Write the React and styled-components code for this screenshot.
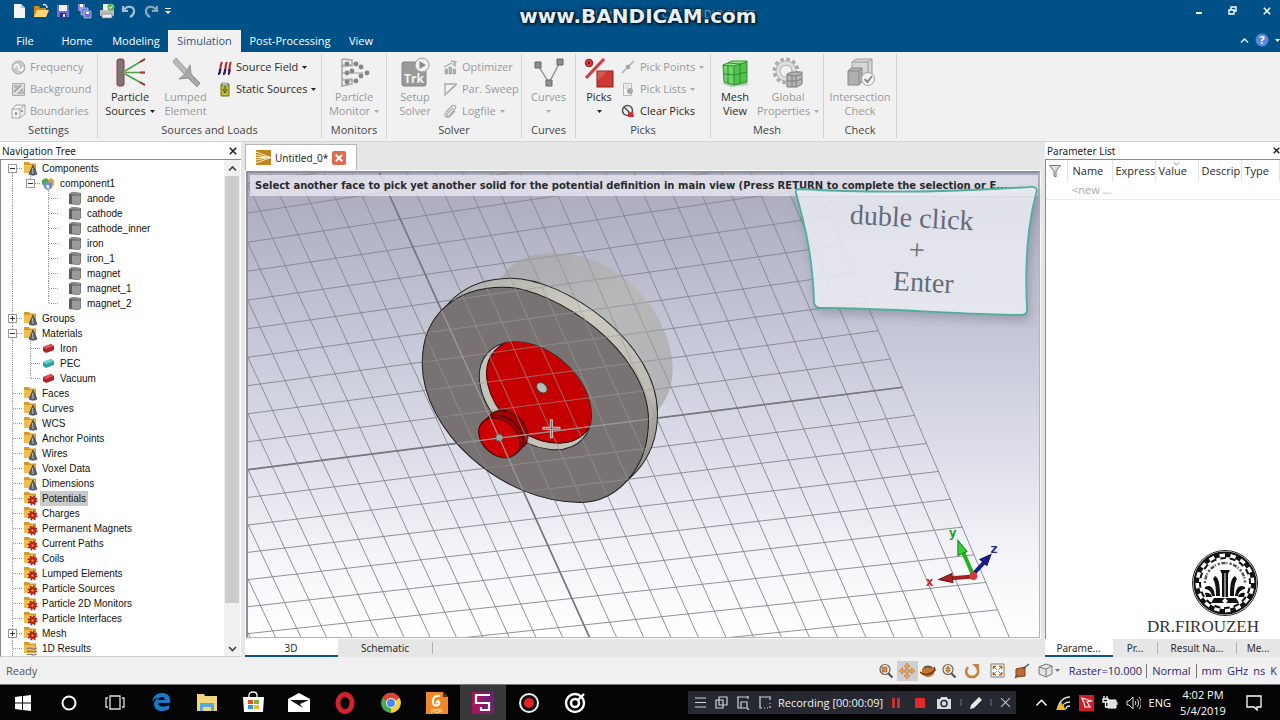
import React from 'react';
import styled, { createGlobalStyle, css } from 'styled-components';

const GlobalStyles = createGlobalStyle`
  * {
    box-sizing: border-box;
  }
  html, body {
    height: 100%;
  }
  body {
    margin: 0;
    overflow: hidden;
    background: #000;
  }
  #root {
    height: 100%;
  }
  button {
    border: 0;
    padding: 0;
    background: none;
    font: inherit;
    color: inherit;
    cursor: default;
  }
  svg {
    display: block;
    flex: none;
  }
`;

const uiFont = css`
  font-family: 'Open Sans', 'Noto Sans', sans-serif;
  font-size: 11px;
  line-height: 14px;
`;

const panelFont = css`
  font-family: 'Noto Sans', sans-serif;
  font-size: 10px;
`;

const AppStyles = styled.div`
  display: flex;
  flex-direction: column;
  height: 100vh;
  background: #e6e6e6;
  color: #2b2b2b;
  ${uiFont}
`;

/* ---------- title bar and ribbon tabs ---------- */

const Header = styled.header`
  position: relative;
  flex: none;
  background: #005187;
  color: #fff;
`;

const TitleRow = styled.div`
  display: flex;
  align-items: center;
  height: 30px;
  padding: 0 9px 8px 11px;
`;

const QuickAccess = styled.div`
  display: flex;
  align-items: center;
  gap: 6px;
  flex: 1;
`;

const WindowButtons = styled.div`
  display: flex;
  align-items: center;
  gap: 25px;
`;

const WindowTitle = styled.div`
  position: absolute;
  top: 7px;
  left: 0;
  right: 0;
  padding-left: 70px;
  text-align: center;
  color: #7fa9c6;
`;

const Watermark = styled.div`
  position: absolute;
  top: 4px;
  left: 0;
  right: 4px;
  text-align: center;
  font-family: 'DejaVu Sans', sans-serif;
  font-weight: bold;
  font-size: 20px;
  line-height: 24px;
  color: #e4f0f8;
  text-shadow: 0 0 2px #001828, 0 0 2px #001828, 1px 1px 3px #001828, 0 0 4px #001828;
`;

const TabRow = styled.nav`
  display: flex;
  height: 22px;
`;

const RibbonTab = styled.button`
  width: ${(p) => p.$width}px;
  text-align: center;
  background: ${(p) => (p.$active ? '#f1f1f1' : 'transparent')};
  color: ${(p) => (p.$active ? '#2f5480' : '#fff')};
`;

const TabTools = styled.div`
  display: flex;
  flex: 1;
  align-items: center;
  justify-content: flex-end;
  gap: 6px;
  padding-bottom: 2px;
`;

/* ---------- ribbon ---------- */

const Ribbon = styled.div`
  display: flex;
  flex: none;
  height: 90px;
  padding: 2px 0 3px;
  background: #f1f1f1;
  border-bottom: 1px solid #d4d4d4;
`;

const RibbonGroup = styled.section`
  display: flex;
  flex-direction: column;
  width: ${(p) => p.$width}px;
  border-right: 1px solid #d2d2d2;
`;

const GroupBody = styled.div`
  display: flex;
  justify-content: ${(p) => (p.$center ? 'center' : 'flex-start')};
  height: 69px;
  padding: 2px 0 0 ${(p) => (p.$center ? 0 : 4)}px;
`;

const GroupLabel = styled.div`
  text-align: center;
  color: #444;
`;

const LargeButton = styled.button`
  display: flex;
  flex-direction: column;
  align-items: center;
  width: ${(p) => p.$width}px;
  padding-top: 1px;
  color: ${(p) => (p.$off ? '#999' : '#2b2b2b')};
  white-space: nowrap;

  svg.art {
    margin-bottom: 1px;
  }
`;

const SmallColumn = styled.div`
  display: flex;
  flex-direction: column;
  padding-left: ${(p) => p.$indent || 0}px;
`;

const SmallButton = styled.button`
  display: flex;
  align-items: center;
  gap: 4px;
  height: 22px;
  color: ${(p) => (p.$off ? '#999' : '#2b2b2b')};
  white-space: nowrap;
`;

const LabelLine = styled.span`
  display: flex;
  align-items: center;
  gap: 4px;
  height: 14px;
`;

/* ---------- workspace ---------- */

const Workspace = styled.main`
  display: flex;
  flex: 1;
  min-height: 0;
  gap: 4px;
`;

const Panel = styled.section`
  display: flex;
  flex-direction: column;
  flex: none;
  width: ${(p) => p.$width}px;
  background: #fff;
`;

const PanelTitle = styled.div`
  display: flex;
  align-items: center;
  justify-content: space-between;
  height: 18px;
  padding: ${(p) => p.$pad};
  ${panelFont}
  color: #222;
  border-bottom: 1px solid #8a8a8a;
`;

const TreeArea = styled.div`
  display: flex;
  flex: 1;
  min-height: 0;
  border-left: 1px solid #8a8a8a;
  border-bottom: 1px solid #cfcfcf;
`;

const Tree = styled.ul`
  flex: 1;
  margin: 0;
  padding: 1px 0 0 3px;
  overflow: hidden;
  list-style: none;
  font-family: 'Liberation Sans', Arial, sans-serif;
  font-size: 10px;
  color: #111;
`;

const TreeRow = styled.li`
  display: flex;
  align-items: center;
  height: 15px;
`;

const dots = (direction) => `repeating-linear-gradient(${direction}, #999 0 1px, transparent 1px 2px)`;
const guides = {
  blank: 'none',
  line: `${dots('to bottom')} 8px 0 / 1px 100% no-repeat`,
  tee: `${dots('to bottom')} 8px 0 / 1px 100% no-repeat, ${dots('to right')} 9px 7px / 9px 1px no-repeat`,
  end: `${dots('to bottom')} 8px 0 / 1px 8px no-repeat, ${dots('to right')} 9px 7px / 9px 1px no-repeat`,
  start: `${dots('to bottom')} 8px 8px / 1px 7px no-repeat, ${dots('to right')} 9px 7px / 9px 1px no-repeat`,
};

const Guide = styled.span`
  display: flex;
  align-items: center;
  justify-content: center;
  flex: none;
  width: 18px;
  height: 15px;
  padding-right: 1px;
  background: ${(p) => guides[p.$kind]};
`;

const Expander = styled.button`
  display: flex;
  align-items: center;
  justify-content: center;
  width: 9px;
  height: 9px;
  border: 1px solid #999;
  background: #fff;
`;

const TreeIcon = styled.span`
  display: flex;
  justify-content: center;
  width: 16px;
  margin-left: ${(p) => (p.$deep ? 9 : 0)}px;
`;

const TreeLabel = styled.span`
  margin-left: 2px;
  padding: 0 2px;
  line-height: 15px;
  white-space: nowrap;
  background: ${(p) => (p.$selected ? '#cacaca' : 'transparent')};
`;

const ScrollBar = styled.div`
  display: flex;
  flex-direction: column;
  align-items: center;
  justify-content: space-between;
  width: 16px;
  margin-right: 1px;
  background: #f0f0f0;
`;

const ScrollButton = styled.button`
  display: flex;
  align-items: center;
  justify-content: center;
  width: 16px;
  height: 16px;
`;

const ScrollTrack = styled.div`
  flex: 1;
  width: 14px;
`;

const ScrollThumb = styled.div`
  height: 92%;
  background: #cdcdcd;
`;

/* ---------- document area ---------- */

const Document = styled.section`
  display: flex;
  flex-direction: column;
  flex: 1;
  min-width: 0;
`;

const FileTab = styled.div`
  display: flex;
  align-items: center;
  gap: 4px;
  align-self: flex-start;
  height: 26px;
  margin: 2px 0 1px;
  padding: 0 10px;
  background: #fff;
  border: 1px solid #b5b5b5;
  border-bottom: 0;
  ${panelFont}
`;

const FileClose = styled.button`
  display: flex;
  align-items: center;
  justify-content: center;
  width: 14px;
  height: 14px;
  border-radius: 2px;
  background: #e2694f;
`;

const Viewport = styled.div`
  position: relative;
  flex: 1;
  min-height: 0;
  margin: 0 1px 1px;
  border: 2px solid #8f8f97;
  border-right: 1px solid #b4b4b4;
  border-bottom: 1px solid #b4b4b4;
  outline: 1px solid #fafafa;
  background: linear-gradient(to bottom, #a9abbd 0%, #c3c5d5 32%, #dedfea 62%, #f5f5f9 83%, #ffffff 100%);

  .scene {
    width: 100%;
    height: 100%;
  }
`;

const Hint = styled.div`
  position: absolute;
  top: 2px;
  left: 2px;
  right: 1px;
  height: 21px;
  padding: 0 5px;
  overflow: hidden;
  white-space: nowrap;
  background: rgba(236, 236, 246, 0.75);
  font-family: 'DejaVu Sans', sans-serif;
  font-weight: bold;
  font-size: 10px;
  line-height: 21px;
  color: #2a2a2a;
`;

const Callout = styled.div`
  position: absolute;
  top: 9px;
  right: -2px;
  width: 252px;
  height: 146px;

  svg {
    position: absolute;
    top: 0;
    left: 0;
  }
`;

const CalloutText = styled.div`
  position: relative;
  display: flex;
  flex-direction: column;
  align-items: center;
  padding: 20px 6px 0 0;
  font-family: 'Liberation Serif', serif;
  font-size: 28px;
  line-height: 32px;
  color: #656b78;
`;

const CalloutLine = styled.span`
  padding-left: ${(p) => p.$indent}px;
  transform: rotate(3deg);
`;

const SheetTabs = styled.div`
  display: flex;
  flex: none;
  height: 18px;
  ${panelFont}
`;

const SheetTab = styled.button`
  flex: ${(p) => (p.$width ? 'none' : '1')};
  width: ${(p) => p.$width}px;
  padding-top: 2px;
  text-align: center;
  border-bottom: 2px solid ${(p) => (p.$active ? '#0a5496' : 'transparent')};
  background: ${(p) => (p.$active ? '#fff' : '#e6e6e6')};
  white-space: nowrap;

  span {
    display: block;
    line-height: 12px;
    border-right: 1px solid ${(p) => (p.$divided ? '#b0b0b0' : 'transparent')};
  }
`;

/* ---------- parameter list ---------- */

const ParameterArea = styled.div`
  position: relative;
  flex: 1;
  border-left: 1px solid #8a8a8a;
`;

const ParameterTable = styled.table`
  width: 100%;
  table-layout: fixed;
  border-collapse: collapse;
  ${uiFont}

  th {
    position: relative;
    height: 22px;
    padding: 0 0 0 3px;
    overflow: hidden;
    text-align: left;
    font-weight: normal;
    white-space: nowrap;
    border-right: 1px solid #e2e2e2;
  }
  th:nth-child(2),
  td {
    padding: 0 0 0 5px;
  }
  td {
    height: 17px;
    color: #a8a8a8;
    white-space: nowrap;
    border-bottom: 1px solid #ececec;
  }
`;

const SortMark = styled.span`
  position: absolute;
  top: 0;
  left: 17px;
`;

const Crest = styled.div`
  position: absolute;
  right: 21px;
  bottom: 2px;
  display: flex;
  flex-direction: column;
  align-items: flex-end;
  font-family: 'Liberation Serif', serif;
  font-size: 17px;
  line-height: 20px;
  color: #333;
`;

/* ---------- status bar ---------- */

const StatusBar = styled.footer`
  display: flex;
  align-items: center;
  flex: none;
  height: 28px;
  padding: 0 3px 0 6px;
  background: #f0f0f0;
  border-bottom: 1px solid #777;
  color: #555;

  .ready {
    flex: 1;
  }
`;

const StatusTools = styled.div`
  display: flex;
  align-items: center;
`;

const StatusButton = styled.button`
  display: flex;
  align-items: center;
  justify-content: center;
  width: ${(p) => p.$width || 21}px;
  height: 20px;
  gap: 2px;
  background: ${(p) => (p.$active ? '#cfcfcf' : 'none')};
`;

const StatusValue = styled.span`
  padding: 0 ${(p) => p.$pad}px;
  color: #2a2a6e;
  white-space: nowrap;
  border-right: ${(p) => (p.$divided ? '1px solid #777' : 0)};
`;

/* ---------- taskbar ---------- */

const TaskBar = styled.footer`
  display: flex;
  align-items: center;
  flex: none;
  height: 35px;
  padding-right: 18px;
  background: #040404;
  color: #fff;
`;

const TaskButton = styled.button`
  display: flex;
  align-items: center;
  justify-content: center;
  width: 46px;
  height: 35px;
  background: ${(p) => (p.$active ? '#38383a' : 'none')};
`;

const Recorder = styled.div`
  display: flex;
  align-items: center;
  justify-content: space-between;
  width: 328px;
  height: 23px;
  margin-left: auto;
  padding: 0 5px;
  background: #262932;
  color: #f0f0f0;
  white-space: nowrap;
`;

const Tray = styled.div`
  display: flex;
  align-items: center;
  gap: 8px;
  margin-left: 19px;
`;

const Clock = styled.time`
  width: 48px;
  margin: 0 11px 0 0;
  text-align: center;
  line-height: 16px;
  white-space: nowrap;
`;

/* ---------- small drawings ---------- */

const Caret = ({ color = '#333' }) => (
  <svg width="5" height="3" viewBox="0 0 5 3">
    <path d="M0 0h5L2.500 3z" fill={color} />
  </svg>
);

const Cross = ({ size = 8, color = '#222', weight = 1.6 }) => (
  <svg width={size} height={size} viewBox="0 0 8 8">
    <path d="M.8 .8l6.400 6.400M7.200 .8L.8 7.200" stroke={color} strokeWidth={weight} />
  </svg>
);

const Chevron = ({ up, color = '#444', size = 9, weight = 1.7 }) => (
  <svg width={size} height={size} viewBox="0 0 9 9">
    <path d={up ? 'M1 6.500L4.500 3L8 6.500' : 'M1 3L4.500 6.500L8 3'} fill="none" stroke={color} strokeWidth={weight} />
  </svg>
);

const quickIcons = {
  New: (
    <>
      <path d="M3 1h7l4 4v10H3z" fill="#f4f4f4" />
      <path d="M10 1v4h4z" fill="#c4c8cc" />
    </>
  ),
  Open: (
    <>
      <path d="M1 3h5l1 2h6v9H1z" fill="#c98d1c" />
      <path d="M4 7h12l-3 7H1z" fill="#ffd677" />
      <path d="M10 2c2-1 4 0 4 3" fill="none" stroke="#e9f0f6" strokeWidth="1.500" />
    </>
  ),
  Save: (
    <>
      <path d="M2 2h12v12H2z" fill="#6c6fd0" />
      <path d="M4 2h8v6H4z" fill="#f2f4fa" />
      <path d="M5 10h6v4H5z" fill="#2d2f6b" />
      <path d="M8 11h2v3H8z" fill="#e8e8f4" />
    </>
  ),
  'Save all': (
    <>
      <path d="M1 1h7v7H1z" fill="#8386dc" />
      <path d="M3 1h3v3H3z" fill="#fff" />
      <path d="M4 5h7v7H4z" fill="#7478d4" stroke="#dce4f4" strokeWidth=".6" />
      <path d="M7 8h7v7H7z" fill="#6c6fd0" stroke="#dce4f4" strokeWidth=".6" />
      <path d="M9 9h3v2H9z" fill="#fff" />
    </>
  ),
  Print: (
    <>
      <path d="M4 1h8v6H4z" fill="#f0f2ea" />
      <path d="M1 7h14v6H1z" fill="#b9bcb8" />
      <path d="M3 11h10v4H3z" fill="#ececec" stroke="#777" strokeWidth=".7" />
      <circle cx="12" cy="4" r="3.600" fill="#58b056" />
      <path d="M10.200 4l1.300 1.500 2.200-3" fill="none" stroke="#fff" />
    </>
  ),
  Undo: <path d="M2 3v5h5M3 7c3-5 11-4 10 2c-.3 2-2 4-4 5" fill="none" stroke="#a9bccb" strokeWidth="2.200" />,
  Redo: <path d="M14 3v5H9M13 7C10 2 2 3 3 9c.3 2 2 4 4 5" fill="none" stroke="#8ba6ba" strokeWidth="2.200" />,
};

const QuickIcon = ({ name }) => (
  <svg width="16" height="16" viewBox="0 0 16 16">
    {quickIcons[name]}
  </svg>
);

const largeIcons = {
  particle: (
    <>
      <rect x="3" y="2" width="7" height="27" rx="2" fill="#777" stroke="#b12f2f" />
      <path d="M11 14L31 2M11 15.500h20M11 17l20 11" fill="none" stroke="#45a845" strokeWidth="1.600" />
      <path d="M26 5l5-3M26 15.500h5M26 25.300l5 2.700" stroke="#c02828" strokeWidth="1.800" />
    </>
  ),
  lumped: (
    <>
      <path d="M6 1l13 14-4 3L3 5z" fill="#b9b9b9" stroke="#999" />
      <path d="M20 8l1 9 9 9-3 4-9-9-9 1 7-6z" fill="#a9a9a9" stroke="#909090" />
    </>
  ),
  monitor: (
    <>
      <path d="M4 2l10 1v6l-10-1M4 2v27l10-2v-5l-10 1" fill="none" stroke="#a6a6a6" strokeWidth="1.500" />
      <path d="M3 10l17-4M3 16h22M3 22l17 3" stroke="#b4b4b4" strokeWidth="1.500" />
      {[[9, 7], [18, 7], [14, 14], [23, 10], [29, 16], [23, 19], [9, 16], [9, 25], [18, 24]].map(([x, y]) => (
        <circle key={`${x}-${y}`} cx={x} cy={y} r="2.400" fill="#868686" />
      ))}
    </>
  ),
  solver: (
    <>
      <rect x="3" y="5" width="24" height="24" rx="2" fill="#9a9a9a" stroke="#848484" />
      <text x="5" y="26" fontFamily="Open Sans" fontWeight="bold" fontSize="12" fill="#f2f2f2">Trk</text>
      <circle cx="23" cy="8" r="7" fill="#efefef" stroke="#9b9b9b" />
      <path d="M20.500 4l6.500 4-6.500 4z" fill="#8c8c8c" />
    </>
  ),
  curves: (
    <>
      <path d="M5 8l11 18L27 5" fill="none" stroke="#888" strokeWidth="1.300" />
      <path d="M2 5h6v6H2zM24 2h6v6h-6zM13 23h6v6h-6z" fill="#8e8e8e" stroke="#666" />
    </>
  ),
  picks: (
    <>
      <path d="M3 21L21 2" stroke="#cf4040" strokeWidth="3.200" />
      <circle cx="6" cy="6" r="3.800" fill="#cf3a3a" stroke="#8d1c1c" />
      <circle cx="6" cy="6" r="1" fill="#5e0c0c" />
      <rect x="14" y="14" width="16" height="16" fill="#cc3a34" stroke="#8d1c1c" />
      <path d="M14.500 24L24 14.500h-9.500z" fill="#d65650" />
    </>
  ),
  mesh: (
    <>
      <path d="M2 26l10 4 18-2-3-3z" fill="#b9c9b9" />
      <path d="M4 8l9-4h15v21l-13 3-10-3z" fill="#6fd468" />
      <path d="M4 8l9-4h15l-13 5z" fill="#98e592" />
      <path d="M15 9l13-4v20l-13 3z" fill="#55c24f" />
      <path d="M4 8l11 1 13-4M15 9v19M4 8l9-4h15v21l-13 3-10-3zM5 17l10 1 13-3M9 8.500v18M21 7v19M9 6l13 1" fill="none" stroke="#26862a" strokeWidth=".9" />
    </>
  ),
  global: (
    <>
      <circle cx="14" cy="14" r="11.500" fill="none" stroke="#adadad" strokeWidth="4" strokeDasharray="3.500 2.521" />
      <circle cx="14" cy="14" r="8" fill="none" stroke="#a8a8a8" strokeWidth="5" />
      <circle cx="14" cy="14" r="8" fill="none" stroke="#dedede" strokeWidth="3.500" />
      <path d="M15 17l5-2h10v12l-5 3H15z" fill="#b5b5b5" stroke="#7d7d7d" />
      <path d="M15 18l9 1 6-2M24 19v11M15 24h9l6-2M20 18v12" fill="none" stroke="#7d7d7d" />
    </>
  ),
  check: (
    <>
      <path d="M8 5l4-3h16v17l-4 4H8z" fill="#d6d6d6" stroke="#9c9c9c" />
      <path d="M8 5h16l4-3M24 5v18" fill="none" stroke="#9c9c9c" />
      <path d="M4 14l3-3h11v13l-3 4H4z" fill="#b0b0b0" stroke="#888" />
      <path d="M4 14h11l3-3M15 14v13" fill="none" stroke="#888" />
      <circle cx="24" cy="22" r="6.500" fill="#f1f1f1" stroke="#a2a2a2" />
      <path d="M20.500 22l3 3 4.500-6" fill="none" stroke="#8a8a8a" strokeWidth="2" />
    </>
  ),
};

const LargeIcon = ({ name }) => (
  <svg className="art" width="32" height="32" viewBox="0 0 32 32">
    {largeIcons[name]}
  </svg>
);

const smallIcons = {
  frequency: (
    <>
      <circle cx="7.500" cy="7.500" r="6.500" fill="#c9c9c9" stroke="#a9a9a9" />
      <path d="M3 8c2-5 4-4 4.500-.5S11 12 12 7" fill="none" stroke="#fff" strokeWidth="1.600" />
    </>
  ),
  background: (
    <>
      <path d="M1.500 1.500h12v12h-12z" fill="#dedede" stroke="#aaa" />
      <path d="M3 10l7-7M7 12l5-5" stroke="#999" strokeWidth="1.500" />
      <path d="M3 3h4v3H3zM9 9h4v3H9z" fill="#b9b9b9" />
    </>
  ),
  boundaries: (
    <>
      <path d="M1 5h8v9H1zM1 5l4-4h9v9l-5 4M9 5l5-4" fill="none" stroke="#a6a6a6" />
      <path d="M5 8v3M11 6v2" stroke="#999" strokeWidth="2" />
    </>
  ),
  field: (
    <>
      <path d="M1 14c4 0 1-8 4-12M6 14c4 0 1-8 4-12M11 14c3 0 0-8 3-12" fill="none" stroke="#b22030" strokeWidth="2" />
      <path d="M1 14c2 0 2-3 2-5M6 14c2 0 2-3 2-5M11 14c2 0 1-3 1.500-5" fill="none" stroke="#2a225e" strokeWidth="2.200" />
    </>
  ),
  battery: (
    <>
      <path d="M4 2h8v12H4z" fill="#b7bd2f" stroke="#6f7420" />
      <path d="M5 1h6v2H5z" fill="#ddd" stroke="#777" strokeWidth=".7" />
      <path d="M6 7l2 4 2-4M8 4v4" fill="none" stroke="#444" />
    </>
  ),
  optimizer: (
    <>
      <path d="M2 9h2.500v5H2zM6 7h2.500v7H6zM10 9h2.500v5H10z" fill="#b3b3b3" stroke="#999" strokeWidth=".6" />
      <path d="M1 7l8-4M8 1l5 1-3 3M12 1v6" fill="none" stroke="#aaa" strokeWidth="1.300" />
    </>
  ),
  sweep: <path d="M1 2h13M2 2v11L13 3M2 13l9-9" fill="none" stroke="#aaa" strokeWidth="1.300" />,
  clip: <path d="M10 4L4 10c-1 2 1 3 2 2l6-7c2-3-1-5-3-3L3 8c-3 4 1 7 4 4l5-5" fill="none" stroke="#aaa" strokeWidth="1.200" />,
  points: (
    <>
      <path d="M1 13L13 1" stroke="#b0b0b0" strokeWidth="1.500" />
      <circle cx="7" cy="7" r="2.300" fill="#a6a6a6" />
    </>
  ),
  lists: (
    <>
      <path d="M2.500 1.500h8v12h-8z" fill="#f4f4f4" stroke="#bbb" />
      <path d="M4 4h5M4 6h3" stroke="#ccc" />
      <circle cx="9" cy="9" r="3" fill="#a9a9a9" />
    </>
  ),
  clear: (
    <>
      <circle cx="6.500" cy="6.500" r="5" fill="none" stroke="#555" strokeWidth="1.600" />
      <path d="M3 3l7 7" stroke="#555" strokeWidth="1.600" />
      <path d="M7 8l3 1 2-2 1 6-6 0z" fill="#c83232" />
    </>
  ),
};

const SmallIcon = ({ name }) => (
  <svg width="15" height="15" viewBox="0 0 15 15">
    {smallIcons[name]}
  </svg>
);

const Folder = ({ kind }) => (
  <svg width="15" height="15" viewBox="0 0 15 15">
    <path d="M1 1h5l1 1.500h6V12H1z" fill="#d29a2a" />
    <path d="M1 4h11v8H1z" fill="#f0bd4c" />
    {kind === 'cone' && (
      <>
        <path d="M10 4L14 13c-2 1.500-6 1.500-8 0z" fill="#5d6370" stroke="#33363f" strokeWidth=".7" />
        <path d="M9.500 7L10 13" stroke="#b4bac6" />
      </>
    )}
    {kind === 'gear' && (
      <>
        <circle cx="9.500" cy="9.500" r="3.900" fill="none" stroke="#a31a12" strokeWidth="2.200" strokeDasharray="1.600 1.463" />
        <circle cx="9.500" cy="9.500" r="2.300" fill="none" stroke="#b9221a" strokeWidth="2.400" />
      </>
    )}
    {kind === 'curve' && (
      <path d="M4 8c3-3 5 2 10-1M4 11c3-3 5 2 10-1M4 14c3-3 5 2 10-1" fill="none" stroke="#8d7a74" strokeWidth="1.200" />
    )}
  </svg>
);

const Solid = () => (
  <svg width="14" height="15" viewBox="0 0 14 15">
    <path d="M1 3l3-2 9 1v10l-2 2-10-1z" fill="#5e5e5e" />
    <path d="M4 4.500h8.500v7l-1.500 2-7-1z" fill="#9b9b9b" />
    <path d="M1 3l3-2 9 1-1.500 2z" fill="#8b8b8b" />
  </svg>
);

const ComponentMark = () => (
  <svg width="14" height="14" viewBox="0 0 14 14">
    <path d="M1 3l4-2 3 2v5l-4 2-3-3z" fill="#4fae46" />
    <path d="M7 3l3-2 3 2v5l-3 3-3-3z" fill="#e5a33a" />
    <path d="M3 6l4-2 4 2v5l-4 2.500-4-2.500z" fill="#6d90d6" />
    <path d="M5.500 7.500l2.500 1v3.500l-2.500-1z" fill="#fff" />
  </svg>
);

const Brick = ({ color, light }) => (
  <svg width="13" height="11" viewBox="0 0 13 11">
    <path d="M1 4l8-3 3 2v4l-8 3-3-2z" fill={color} />
    <path d="M1 4l8-3 3 2-8 3z" fill={light} />
  </svg>
);

const treeIcons = {
  cone: <Folder kind="cone" />,
  gear: <Folder kind="gear" />,
  curve: <Folder kind="curve" />,
  solid: <Solid />,
  component: <ComponentMark />,
  red: <Brick color="#b3202a" light="#e0525a" />,
  teal: <Brick color="#2aa3a0" light="#6dd3cf" />,
};

/* ---------- 3D scene ---------- */

// The working plane seen in perspective: i runs along x, k along y.
const project = (i, k) => {
  const w = 1 - 0.00266 * i + 0.0016 * k;
  return [(24.44 * i + 13 * k + 499) / w, (27.66 * k - 4.41 * i + 437.7) / w];
};

const planeLine = (from, to) => {
  const [x1, y1] = project(...from);
  const [x2, y2] = project(...to);
  return `M${x1.toFixed(1)} ${y1.toFixed(1)}L${x2.toFixed(1)} ${y2.toFixed(1)}`;
};

const steps = (from, to) => Array.from({ length: to - from + 1 }, (_, n) => from + n);
const planeGrid = [
  ...steps(-17, 15).map((i) => planeLine([i, -15], [i, 10])),
  ...steps(-15, 10).map((k) => planeLine([-18, k], [15, k])),
].join('');
const planeAxes = planeLine([0, -15], [0, 10]) + planeLine([-18, 0], [15, 0]);

const discFace = 'M503 287C553 287 648 350 648 420C648 470 615 502 580 502C500 502 422 430 422 363C422 315 455 287 503 287z';
const discBack = 'M511 278C562 278 657 341 657 413C657 461 624 493 589 493C509 493 431 421 431 354C431 306 464 278 511 278z';
const ghostBody = 'M501 277C515 258 535 252 553 253C575 254 587 257 600 263C640 281 669 325 672 363C673 383 668 398 657 410L600 400L520 300z';

const Scene = () => (
  <svg className="scene" viewBox="248 173 790 466" preserveAspectRatio="xMinYMin slice" aria-label="3D view">
    <defs>
      <linearGradient id="rim" x1="0" y1="0" x2="1" y2="1">
        <stop offset="0" stopColor="#a9aaa6" />
        <stop offset=".4" stopColor="#cdcbc0" />
        <stop offset=".75" stopColor="#bdbbb2" />
        <stop offset="1" stopColor="#77756f" />
      </linearGradient>
      <linearGradient id="ghost" x1="0" y1="0" x2="1" y2="1">
        <stop offset="0" stopColor="#a3a5a8" />
        <stop offset=".5" stopColor="#b4b5b0" />
        <stop offset="1" stopColor="#a7a8a8" />
      </linearGradient>
      <clipPath id="hole">
        <ellipse cx="535" cy="395.500" rx="64" ry="44" transform="rotate(42 535 395.500)" />
      </clipPath>
      <clipPath id="disc">
        <path d={discFace} />
      </clipPath>
      <clipPath id="solids">
        <path d={ghostBody} />
        <path d={discBack} />
      </clipPath>
    </defs>
    <path d={planeGrid} stroke="#85868c" strokeWidth=".9" fill="none" />
    <path d={planeAxes} stroke="#77787e" strokeWidth="1.700" fill="none" />

    <path d={ghostBody} fill="url(#ghost)" fillOpacity=".75" />
    <path d={discBack} fill="url(#rim)" stroke="#222" />
    <path d={discFace} fill="#787372" stroke="#1c1c1c" />
    <ellipse cx="535" cy="395.500" rx="64" ry="44" transform="rotate(42 535 395.500)" fill="#c3c3b9" stroke="#222" />
    <g clipPath="url(#hole)">
      <ellipse cx="540" cy="391" rx="61" ry="43" transform="rotate(42 540 391)" fill="#c40000" stroke="#300" />
    </g>
    <ellipse cx="541.500" cy="387.500" rx="6" ry="4.500" transform="rotate(42 541.500 387.500)" fill="#b9bab4" stroke="#444" />
    <ellipse cx="507" cy="430" rx="23" ry="17" transform="rotate(42 507 430)" fill="#9c0000" stroke="#300" />
    <ellipse cx="505" cy="432" rx="23" ry="17" transform="rotate(42 505 432)" fill="#9c0000" />
    <ellipse cx="502" cy="435" rx="23" ry="17" transform="rotate(42 502 435)" fill="#a80000" stroke="#300" />
    <ellipse cx="499" cy="437.500" rx="23" ry="17" transform="rotate(42 499 437.500)" fill="#cc0000" stroke="#300" />
    <circle cx="499" cy="437.500" r="3.500" fill="#a9a9a4" stroke="#555" />

    <g clipPath="url(#solids)">
      <path d={planeGrid} stroke="#8f8f90" strokeOpacity=".45" fill="none" />
    </g>
    <g clipPath="url(#disc)">
      <path d={planeGrid} stroke="#b4b0b0" strokeOpacity=".25" fill="none" />
      <path d={planeAxes} stroke="#a0a0a0" strokeOpacity=".7" strokeWidth="1.300" fill="none" />
    </g>
    <path d="M551 419v19M542 428h18" stroke="#c7c7c7" strokeWidth="3" />
    <path d="M551 420v17M543 428h16" stroke="#8a5a5a" strokeWidth="1" />

    <path d="M972 574L986 559" stroke="#1c1c8c" strokeWidth="4" />
    <path d="M990 554l-11 5 7 6z" fill="#1c1c8c" stroke="#10105c" />
    <path d="M972 574L961 549" stroke="#23b023" strokeWidth="4" />
    <path d="M957 540l0 15 9-4z" fill="#33d233" stroke="#138013" />
    <path d="M972 576L948 578" stroke="#9c2222" strokeWidth="4" />
    <path d="M938 579l13-6 1 9z" fill="#a82626" stroke="#6c1414" />
    <circle cx="972.500" cy="575.500" r="4" fill="#d23a3a" />
    <g fontFamily="DejaVu Sans Mono, monospace" fontSize="13" fontWeight="bold">
      <text x="948" y="537" fill="#22a022">y</text>
      <text x="989" y="553" fill="#26269c">z</text>
      <text x="925" y="585" fill="#d42020">x</text>
    </g>
  </svg>
);

const CrestMark = () => (
  <svg width="68" height="68" viewBox="0 0 68 68" aria-hidden="true">
    <circle cx="34" cy="34" r="32.500" fill="#fff" stroke="#222" />
    <circle cx="34" cy="34" r="30.500" fill="none" stroke="#111" strokeWidth="2" />
    <circle cx="34" cy="34" r="28" fill="none" stroke="#111" strokeWidth="4" pathLength="160" strokeDasharray="5 5" />
    <circle cx="34" cy="34" r="25" fill="none" stroke="#111" strokeWidth="2" pathLength="160" strokeDasharray="6 4" strokeDashoffset="5" />
    <clipPath id="crestTop">
      <path d="M0 34h68v34H0z" />
    </clipPath>
    <circle cx="34" cy="34" r="20" fill="none" stroke="#555" strokeWidth="2.500" strokeDasharray="2 1.500 4 1 1 2" pathLength="120" transform="rotate(180 34 34)" clipPath="url(#crestTop)" />
    <path d="M29 21h10l-2 4v23h-6V25z" fill="#111" />
    <path d="M34 24v24" stroke="#fff" />
    <path d="M24 27c3 2 5 5 5 20h-4c0-9-1-14-3-17zM44 27c-3 2-5 5-5 20h4c0-9 1-14 3-17z" fill="#111" />
    <path d="M14 38c6-3 9 1 10 9h-3c-1-5-4-7-7-7zM54 38c-6-3-9 1-10 9h3c1-5 4-7 7-7zM14 44c4-1 6 1 7 4h-6zM54 44c-4-1-6 1-7 4h6z" fill="#111" />
    <path d="M23 49h22l3 5H20z" fill="#111" />
    <path d="M31 52l3-3 3 3-3 3z" fill="#fff" />
  </svg>
);

/* ---------- data ---------- */

const ribbonTabs = [
  { label: 'File', width: 50 },
  { label: 'Home', width: 54 },
  { label: 'Modeling', width: 64 },
  { label: 'Simulation', width: 73, active: true },
  { label: 'Post-Processing', width: 98 },
  { label: 'View', width: 44 },
];

const gears = [
  'Potentials',
  'Charges',
  'Permanent Magnets',
  'Current Paths',
  'Coils',
  'Lumped Elements',
  'Particle Sources',
  'Particle 2D Monitors',
  'Particle Interfaces',
];
const solids = ['anode', 'cathode', 'cathode_inner', 'iron', 'iron_1', 'magnet', 'magnet_1', 'magnet_2'];
const shapes = ['Faces', 'Curves', 'WCS', 'Anchor Points', 'Wires', 'Voxel Data', 'Dimensions'];

const treeRows = [
  { label: 'Components', icon: 'cone', cells: ['start'], box: '-' },
  { label: 'component1', icon: 'component', cells: ['line', 'end'], box: '-' },
  ...solids.map((label, n) => ({
    label,
    icon: 'solid',
    cells: ['line', 'blank', n === solids.length - 1 ? 'end' : 'tee'],
  })),
  { label: 'Groups', icon: 'cone', cells: ['tee'], box: '+' },
  { label: 'Materials', icon: 'cone', cells: ['tee'], box: '-' },
  { label: 'Iron', icon: 'red', cells: ['line', 'tee'] },
  { label: 'PEC', icon: 'teal', cells: ['line', 'tee'] },
  { label: 'Vacuum', icon: 'red', cells: ['line', 'end'] },
  ...shapes.map((label) => ({ label, icon: 'cone', cells: ['tee'] })),
  ...gears.map((label) => ({ label, icon: 'gear', cells: ['tee'] })),
  { label: 'Mesh', icon: 'gear', cells: ['tee'], box: '+' },
  { label: '1D Results', icon: 'curve', cells: ['tee'] },
];

/* ---------- pieces ---------- */

function Large({ icon, lines, width, off, caret }) {
  return (
    <LargeButton $width={width} $off={off}>
      <LargeIcon name={icon} />
      {lines.map((line, n) => (
        <LabelLine key={n}>
          {line}
          {caret && n === lines.length - 1 && <Caret color={off ? '#aaa' : '#222'} />}
        </LabelLine>
      ))}
    </LargeButton>
  );
}

function Small({ icon, label, off, caret }) {
  return (
    <SmallButton $off={off}>
      <SmallIcon name={icon} />
      {label}
      {caret && <Caret color={off ? '#aaa' : '#222'} />}
    </SmallButton>
  );
}

function RibbonBar() {
  return (
    <Ribbon>
      <RibbonGroup $width={98}>
        <GroupBody>
          <SmallColumn $indent={7}>
            <Small icon="frequency" label="Frequency" off />
            <Small icon="background" label="Background" off />
            <Small icon="boundaries" label="Boundaries" off />
          </SmallColumn>
        </GroupBody>
        <GroupLabel>Settings</GroupLabel>
      </RibbonGroup>
      <RibbonGroup $width={224}>
        <GroupBody>
          <Large icon="particle" lines={['Particle', 'Sources']} width={56} caret />
          <Large icon="lumped" lines={['Lumped', 'Element']} width={55} off />
          <SmallColumn $indent={4}>
            <Small icon="field" label="Source Field" caret />
            <Small icon="battery" label="Static Sources" caret />
          </SmallColumn>
        </GroupBody>
        <GroupLabel>Sources and Loads</GroupLabel>
      </RibbonGroup>
      <RibbonGroup $width={65}>
        <GroupBody $center>
          <Large icon="monitor" lines={['Particle', 'Monitor']} width={60} off caret />
        </GroupBody>
        <GroupLabel>Monitors</GroupLabel>
      </RibbonGroup>
      <RibbonGroup $width={135}>
        <GroupBody>
          <Large icon="solver" lines={['Setup', 'Solver']} width={48} off />
          <SmallColumn $indent={4}>
            <Small icon="optimizer" label="Optimizer" off />
            <Small icon="sweep" label="Par. Sweep" off />
            <Small icon="clip" label="Logfile" off caret />
          </SmallColumn>
        </GroupBody>
        <GroupLabel>Solver</GroupLabel>
      </RibbonGroup>
      <RibbonGroup $width={54}>
        <GroupBody $center>
          <Large icon="curves" lines={['Curves', '']} width={48} off caret />
        </GroupBody>
        <GroupLabel>Curves</GroupLabel>
      </RibbonGroup>
      <RibbonGroup $width={135}>
        <GroupBody>
          <Large icon="picks" lines={['Picks', '']} width={38} caret />
          <SmallColumn $indent={3}>
            <Small icon="points" label="Pick Points" off caret />
            <Small icon="lists" label="Pick Lists" off caret />
            <Small icon="clear" label="Clear Picks" />
          </SmallColumn>
        </GroupBody>
        <GroupLabel>Picks</GroupLabel>
      </RibbonGroup>
      <RibbonGroup $width={113}>
        <GroupBody>
          <Large icon="mesh" lines={['Mesh', 'View']} width={40} />
          <Large icon="global" lines={['Global', 'Properties']} width={66} off caret />
        </GroupBody>
        <GroupLabel>Mesh</GroupLabel>
      </RibbonGroup>
      <RibbonGroup $width={73}>
        <GroupBody $center>
          <Large icon="check" lines={['Intersection', 'Check']} width={68} off />
        </GroupBody>
        <GroupLabel>Check</GroupLabel>
      </RibbonGroup>
    </Ribbon>
  );
}

function NavigationTree() {
  return (
    <Panel $width={241}>
      <PanelTitle $pad="0 4px 0 2px">
        Navigation Tree
        <button aria-label="Close navigation tree">
          <Cross />
        </button>
      </PanelTitle>
      <TreeArea>
        <Tree>
          {treeRows.map((row) => (
            <TreeRow key={row.label}>
              {row.cells.map((kind, n) => (
                <Guide key={n} $kind={kind}>
                  {row.box && n === row.cells.length - 1 && (
                    <Expander aria-label={`Toggle ${row.label}`}>
                      <svg width="5" height="5" viewBox="0 0 5 5">
                        <path d={row.box === '+' ? 'M0 2.500h5M2.500 0v5' : 'M0 2.500h5'} stroke="#333" />
                      </svg>
                    </Expander>
                  )}
                </Guide>
              ))}
              <TreeIcon $deep={row.cells.length === 3}>{treeIcons[row.icon]}</TreeIcon>
              <TreeLabel $selected={row.label === 'Potentials'}>{row.label}</TreeLabel>
            </TreeRow>
          ))}
        </Tree>
        <ScrollBar>
          <ScrollButton aria-label="Scroll up">
            <Chevron up />
          </ScrollButton>
          <ScrollTrack>
            <ScrollThumb />
          </ScrollTrack>
          <ScrollButton aria-label="Scroll down">
            <Chevron />
          </ScrollButton>
        </ScrollBar>
      </TreeArea>
    </Panel>
  );
}

function DocumentArea() {
  return (
    <Document>
      <FileTab>
        <svg width="15" height="15" viewBox="0 0 15 15">
          <path d="M0 0h15v15H0z" fill="#c0861a" />
          <path d="M0 2l15 5.500L0 13M0 7.500h15M0 5l12 2.500L0 10" fill="none" stroke="#fff3d8" />
        </svg>
        Untitled_0*
        <FileClose aria-label="Close Untitled_0">
          <Cross color="#fff" weight={2} />
        </FileClose>
      </FileTab>
      <Viewport>
        <Scene />
        <Hint>
          Select another face to pick yet another solid for the potential definition in main view (Press RETURN to
          complete the selection or E...
        </Hint>
        <Callout>
          <svg width="252" height="146" viewBox="788 181 252 146">
            <linearGradient id="paper" x1="0" y1="0" x2="0" y2="1">
              <stop offset="0" stopColor="#fff" stopOpacity=".5" />
              <stop offset=".06" stopColor="#fff" stopOpacity=".55" />
              <stop offset=".09" stopColor="#f1f2f8" stopOpacity=".82" />
              <stop offset="1" stopColor="#f1f2f8" stopOpacity=".86" />
            </linearGradient>
            <path
              d="M795 192C794 188 797 188 800 188C880 193 950 191 1028 186C1035 185 1037 188 1035 193C1025 230 1024 270 1026 309C1026 313 1024 314 1020 314C950 313 890 307 820 307C815 307 813 305 813 300C812 260 805 228 795 192z"
              fill="url(#paper)"
              stroke="#4fae9c"
              strokeWidth="1.800"
              filter="drop-shadow(2px 5px 5px rgba(60, 60, 80, .3))"
            />
          </svg>
          <CalloutText>
            <CalloutLine $indent={0}>duble click</CalloutLine>
            <CalloutLine $indent={10}>+</CalloutLine>
            <CalloutLine $indent={22}>Enter</CalloutLine>
          </CalloutText>
        </Callout>
      </Viewport>
      <SheetTabs>
        <SheetTab $width={93} $active>
          <span>3D</span>
        </SheetTab>
        <SheetTab $width={95} $divided>
          <span>Schematic</span>
        </SheetTab>
      </SheetTabs>
    </Document>
  );
}

function ParameterList() {
  return (
    <Panel $width={235}>
      <PanelTitle $pad="0 0 0 2px">
        Parameter List
        <button aria-label="Close parameter list">
          <Cross size={7} />
        </button>
      </PanelTitle>
      <ParameterArea>
        <ParameterTable>
          <colgroup>
            <col width="21" />
            <col width="45" />
            <col width="43" />
            <col width="43" />
            <col width="43" />
            <col />
          </colgroup>
          <thead>
            <tr>
              <th aria-label="Filter">
                <svg width="12" height="13" viewBox="0 0 12 13">
                  <path d="M.500 .500h11L7 6v6L5 11V6z" fill="#ddd" stroke="#777" />
                </svg>
              </th>
              <th>Name</th>
              <th>Express</th>
              <th>
                <SortMark>
                  <Chevron size={7} color="#888" weight={1.2} />
                </SortMark>
                Value
              </th>
              <th>Descrip</th>
              <th>Type</th>
            </tr>
          </thead>
          <tbody>
            <tr>
              <td />
              <td>&lt;new ...</td>
              <td colSpan="4" />
            </tr>
          </tbody>
        </ParameterTable>
        <Crest>
          <CrestMark />
          DR.FIROUZEH
        </Crest>
      </ParameterArea>
      <SheetTabs>
        <SheetTab $width={68} $active>
          <span>Parame...</span>
        </SheetTab>
        <SheetTab $width={45} $divided>
          <span>Pr...</span>
        </SheetTab>
        <SheetTab $width={79} $divided>
          <span>Result Na...</span>
        </SheetTab>
        <SheetTab>
          <span>Me...</span>
        </SheetTab>
      </SheetTabs>
    </Panel>
  );
}

const Magnifier = ({ sign }) => (
  <svg width="16" height="16" viewBox="0 0 16 16">
    <path d="M10 10l4.500 4.500" stroke="#555" strokeWidth="2.200" />
    <circle cx="7" cy="6.500" r="5" fill="#f7efe6" stroke="#666" strokeWidth="1.200" />
    <path d={sign === '+' ? 'M4 4h5v5H4z' : 'M7 3L4.500 6h5zM7 10L4.500 7h5z'} fill="#d88a4a" stroke="#9a5a26" strokeWidth=".6" />
  </svg>
);

function Status() {
  return (
    <StatusBar>
      <span className="ready">Ready</span>
      <StatusTools>
        <StatusButton aria-label="Zoom to window">
          <Magnifier sign="+" />
        </StatusButton>
        <StatusButton aria-label="Pan" $active>
          <svg width="16" height="16" viewBox="0 0 16 16">
            <path d="M8 0l3 3.500H9V7h3.500V5L16 8l-3.500 3V9H9v3.500h2L8 16l-3-3.500h2V9H3.500v2L0 8l3.500-3v2H7V3.500H5z" fill="#e7a765" stroke="#b87632" strokeWidth=".6" />
          </svg>
        </StatusButton>
        <StatusButton aria-label="Rotate">
          <svg width="16" height="16" viewBox="0 0 16 16">
            <path d="M2 6c2-4 10-4 12 0v5c-3 4-9 4-12 0z" fill="#c9742c" />
            <path d="M0 9c4 4 11 3 15-2l-1-3" fill="none" stroke="#6a3d18" strokeWidth="1.600" />
            <path d="M4 5c2-2 6-2 8 0" fill="none" stroke="#5a5a5a" strokeWidth="2" />
          </svg>
        </StatusButton>
        <StatusButton aria-label="Zoom">
          <Magnifier sign="-" />
        </StatusButton>
        <StatusButton aria-label="Rotate in plane" $width={24}>
          <svg width="16" height="16" viewBox="0 0 16 16">
            <path d="M4 4c-4 5-1 10 4 10s8-5 5-9" fill="none" stroke="#c98240" strokeWidth="2.600" />
            <path d="M8 1h7v7z" fill="#c98240" />
          </svg>
        </StatusButton>
        <StatusButton aria-label="Fit to view" $width={28}>
          <svg width="15" height="15" viewBox="0 0 15 15">
            <path d="M1 1h13v13H1z" fill="#fff" stroke="#777" />
            <path d="M3 3h3L3 6zM12 3v3L9 3zM3 12V9l3 3zM12 12H9l3-3zM5 5l2 2M10 5L8 7M5 10l2-2M10 10L8 8" fill="#c0631e" stroke="#c0631e" strokeWidth=".8" />
          </svg>
        </StatusButton>
        <StatusButton aria-label="Cutting plane">
          <svg width="16" height="16" viewBox="0 0 16 16">
            <path d="M2 6l9-2v9l-9 1z" fill="#c06a35" stroke="#7e4018" />
            <path d="M9 6l6-5M1 15l3-3" stroke="#555" strokeWidth="1.500" />
          </svg>
        </StatusButton>
        <StatusButton aria-label="View style" $width={32}>
          <svg width="15" height="15" viewBox="0 0 15 15">
            <path d="M1 4l7-3 6 2v8l-6 3-7-3zM1 4l7 2 6-3M8 6v8" fill="#e3e3e3" stroke="#777" />
          </svg>
          <Caret color="#777" />
        </StatusButton>
        <StatusValue $pad={4} $divided>Raster=10.000</StatusValue>
        <StatusValue $pad={5} $divided>Normal</StatusValue>
        <StatusValue $pad={5}>mm</StatusValue>
        <StatusValue $pad={0}>GHz</StatusValue>
        <StatusValue $pad={5}>ns</StatusValue>
        <StatusValue $pad={0}>K</StatusValue>
      </StatusTools>
    </StatusBar>
  );
}

const taskIcons = {
  Start: <path d="M3 6l7-1v6.500H3zM11 5l8-1v7.500h-8zM3 12.500h7V19l-7-1zM11 12.500h8V20l-8-1z" fill="#fff" />,
  Cortana: <circle cx="11" cy="12" r="6.500" fill="none" stroke="#fff" strokeWidth="2" />,
  'Task view': <path d="M6 5h10v13H6zM4 7H2v9h2M18 7h2v9h-2" fill="none" stroke="#ddd" strokeWidth="1.300" />,
  Edge: (
    <path
      d="M2 11C3 5 7 2 12 2c6 0 9 4 8 10H8c0 3 4 5 11 2v4c-7 4-15 2-15-5 0-3 2-5 5-6-4 0-6 2-7 4zM8 9h7c0-4-6-4-7 0z"
      fill="#1979ca"
    />
  ),
  Explorer: (
    <>
      <path d="M1 3h7l1 2h12v15H1z" fill="#f3d67c" />
      <path d="M4 12h14v8h-3v-4H7v4H4z" fill="#57a9d8" />
    </>
  ),
  Store: (
    <>
      <path d="M7 7V4c0-4 8-4 8 0v3" fill="none" stroke="#fff" strokeWidth="1.300" />
      <path d="M1 6h21l-1 15H2z" fill="#fff" />
      <path d="M6 9h5v4H6z" fill="#e8502a" />
      <path d="M12 9h5v4h-5z" fill="#7ab829" />
      <path d="M6 14h5v4H6z" fill="#2a9fe0" />
      <path d="M12 14h5v4h-5z" fill="#fbb917" />
    </>
  ),
  Mail: (
    <>
      <path d="M0 8l11-6 11 6v13H0z" fill="#fff" />
      <path d="M2 9h19l-9 4 3 4z" fill="#111" />
    </>
  ),
  Opera: <ellipse cx="11" cy="12" rx="7" ry="8.500" fill="none" stroke="#d2222e" strokeWidth="5" />,
  Chrome: (
    <>
      <circle cx="11" cy="12" r="10" fill="#4aa850" />
      <path d="M11 12L2.300 7C6 0 16 0 19.700 7z" fill="#dc4437" />
      <path d="M11 12l8.700-5c3 6-1 14-8.700 15z" fill="#fccd37" />
      <circle cx="11" cy="12" r="5" fill="#f4f4f4" />
      <circle cx="11" cy="12" r="4" fill="#4a87ee" />
    </>
  ),
  'PDF reader': (
    <>
      <path d="M0 1h17l5 5v17H0z" fill="#f0882a" />
      <path d="M17 1l5 5h-5z" fill="#5a2f08" />
      <path d="M14 5c-6-1-9 4-6 9 5 2 7-3 4-4l-2 2" fill="none" stroke="#fff" strokeWidth="2" />
      <text x="5" y="22" fontFamily="Liberation Sans" fontSize="6" fill="#fff">PDF</text>
    </>
  ),
  'CST Studio': (
    <>
      <path d="M0 1h22v22H0z" fill="#a3145e" />
      <path d="M11 1h11v22H11z" fill="#6f2272" />
      <path d="M18 4H4v8h13v7H9v-3" fill="none" stroke="#fff" strokeWidth="2.200" />
    </>
  ),
  Bandicam: (
    <>
      <circle cx="11" cy="12" r="9" fill="#111" stroke="#eee" strokeWidth="2" />
      <circle cx="11" cy="12" r="5" fill="#e02424" />
    </>
  ),
  Groove: (
    <>
      <circle cx="11" cy="12" r="9" fill="none" stroke="#fff" strokeWidth="2.400" />
      <circle cx="11" cy="12" r="4" fill="none" stroke="#fff" strokeWidth="2.600" />
      <path d="M14 9l6-6" stroke="#fff" strokeWidth="2.400" />
    </>
  ),
};

const line = (d, width = 15, color = '#cfd2d8') => (
  <svg width={width} height="15" viewBox={`0 0 ${width} 15`}>
    <path d={d} fill="none" stroke={color} strokeWidth="1.200" />
  </svg>
);

function Tasks() {
  return (
    <TaskBar>
      {Object.keys(taskIcons).map((name) => (
        <TaskButton key={name} aria-label={name} $active={name === 'CST Studio'}>
          <svg width="22" height="24" viewBox="0 0 22 24">
            {taskIcons[name]}
          </svg>
        </TaskButton>
      ))}
      <Recorder>
        <button aria-label="Menu">{line('M2 3h11M2 7.500h11M2 12h11')}</button>
        <button aria-label="Window">{line('M2 5h7v8H2zM5 2h8v8H5z')}</button>
        <button aria-label="Region search">{line('M2 2h11M3 2v11h3M13 1v3M12 13l2 2M6 7h6v6H6z')}</button>
        <button aria-label="Region">{line('M2 2h10M3 2v11h2M7 13h1M10 13h1M13 13V11M13 9V8M13 1v4')}</button>
        <span>Recording [00:00:09]</span>
        <button aria-label="Pause">
          <svg width="14" height="14" viewBox="0 0 14 14">
            <path d="M3 2h3v10H3zM8 2h3v10H8z" fill="#c23030" />
          </svg>
        </button>
        <button aria-label="Stop">
          <svg width="20" height="14" viewBox="0 0 20 14">
            <path d="M5 2h10v10H5z" fill="#e02a2a" />
          </svg>
        </button>
        <button aria-label="Screenshot">
          <svg width="16" height="14" viewBox="0 0 16 14">
            <path d="M1 3h3l1-2h6l1 2h3v10H1z" fill="#d8dade" />
            <circle cx="8" cy="7.500" r="3" fill="#d8dade" stroke="#262932" strokeWidth="1.500" />
          </svg>
        </button>
        {line('M2 4v7', 4, '#666a74')}
        <button aria-label="Draw">
          <svg width="14" height="14" viewBox="0 0 14 14">
            <path d="M1 13l1-4 8-8 3 3-8 8z" fill="#e8e8ea" />
          </svg>
        </button>
        {line('M2 4v7', 4, '#666a74')}
        <button aria-label="Close recorder">
          <Cross size={11} color="#b8bac0" weight={0.9} />
        </button>
      </Recorder>
      <Tray>
        <Chevron up color="#fff" size={13} weight={1} />
        <svg width="15" height="15" viewBox="0 0 15 15">
          <path d="M2 14C2 8 7 2 14 2M6 14c0-4 3-7 8-7M10 14c0-2 1-3 4-3" fill="none" stroke="#ddd" strokeWidth="1.400" />
          <path d="M5 7l5 8H0z" fill="#f5b921" />
        </svg>
        <svg width="15" height="16" viewBox="0 0 15 16">
          <path d="M0 0h15v16H0z" fill="#d01c28" />
          <path d="M3 3l9 3-4 1 3 5H6L5 8z" fill="none" stroke="#fff" strokeWidth="1.200" />
        </svg>
        <svg width="16" height="14" viewBox="0 0 16 14">
          <path d="M6 4h8v8H6zM15 6v3" fill="#ddd" stroke="#fff" />
          <path d="M1 3h5v3H1zM2 0v3M5 0v3M3.500 6v5H6" fill="none" stroke="#fff" strokeWidth="1.300" />
        </svg>
        <svg width="15" height="14" viewBox="0 0 15 14">
          <path d="M1 5h2l4-4v12L3 9H1zM9 5c1 1 1 3 0 4M11 3c2 2 2 6 0 8M13 1c3 3 3 9 0 12" fill="none" stroke="#ddd" />
        </svg>
        <span>ENG</span>
        <Clock>
          4:02 PM
          <br />
          5/4/2019
        </Clock>
        <svg width="16" height="16" viewBox="0 0 16 16">
          <path d="M1 1h14v11h-4v3l-3-3H1z" fill="none" stroke="#fff" strokeWidth="1.300" />
        </svg>
      </Tray>
    </TaskBar>
  );
}

export default function App() {
  return (
    <AppStyles>
      <GlobalStyles />
      <Header>
        <TitleRow>
          <QuickAccess>
            {Object.keys(quickIcons).map((name) => (
              <button key={name} aria-label={name}>
                <QuickIcon name={name} />
              </button>
            ))}
            <button aria-label="Customize quick access">
              <svg width="6" height="7" viewBox="0 0 6 7">
                <path d="M0 0h6v1H0zM0 3h6L3 6z" fill="#fff" />
              </svg>
            </button>
          </QuickAccess>
          <WindowButtons>
            <button aria-label="Minimize">
              <svg width="8" height="8" viewBox="0 0 8 8">
                <path d="M1 5h6v2H1z" fill="#fff" />
              </svg>
            </button>
            <button aria-label="Restore">
              <svg width="10" height="10" viewBox="0 0 10 10">
                <path d="M1 4h5v4H1zM3 4V1h5v4H6" fill="none" stroke="#fff" strokeWidth="1.400" />
              </svg>
            </button>
            <button aria-label="Close">
              <Cross color="#fff" />
            </button>
          </WindowButtons>
        </TitleRow>
        <WindowTitle>Untitled_0* - CST STUDIO SUITE</WindowTitle>
        <Watermark>www.BANDICAM.com</Watermark>
        <TabRow>
          {ribbonTabs.map((tab) => (
            <RibbonTab key={tab.label} $width={tab.width} $active={tab.active}>
              {tab.label}
            </RibbonTab>
          ))}
          <TabTools>
            <Chevron up color="#cfe0ec" />
            <button aria-label="Help">
              <svg width="14" height="14" viewBox="0 0 14 14">
                <circle cx="7" cy="7" r="6.500" fill="#5b87d8" />
                <text x="7" y="11" textAnchor="middle" fontFamily="Open Sans" fontWeight="bold" fontSize="11" fill="#fff">?</text>
              </svg>
            </button>
            <Caret color="#fff" />
          </TabTools>
        </TabRow>
      </Header>
      <RibbonBar />
      <Workspace>
        <NavigationTree />
        <DocumentArea />
        <ParameterList />
      </Workspace>
      <Status />
      <Tasks />
    </AppStyles>
  );
}
